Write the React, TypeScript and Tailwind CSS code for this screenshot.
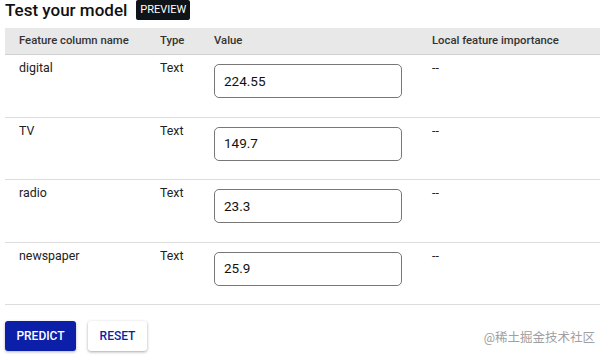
import React from "react";

const rows = [
  { name: "digital", value: "224.55" },
  { name: "TV", value: "149.7" },
  { name: "radio", value: "23.3" },
  { name: "newspaper", value: "25.9" },
];

export default function App() {
  return (
    <div
      className="relative w-[600px] h-[357px] bg-white overflow-hidden text-[#202124]"
      style={{ fontFamily: "Roboto, 'Noto Sans CJK SC', sans-serif" }}
    >
      <div className="flex items-center h-[20px] pl-[5px] gap-[9px]">
        <span className="text-[17px] font-medium leading-[20px] text-[#111]">Test your model</span>
        <span className="bg-[#0f1419] text-white text-[11px] leading-[20px] px-[4px] rounded-[2px] h-[20px]">
          PREVIEW
        </span>
      </div>
      <div className="ml-[5px] mt-[8px]">
        <div className="flex h-[27px] items-center bg-[#e8e8e8] border-b border-[#d0d0d0] text-[11.3px] font-medium text-[#333]">
          <div className="w-[155px] pl-[14px]">Feature column name</div>
          <div className="w-[54px]">Type</div>
          <div className="w-[218px]">Value</div>
          <div>Local feature importance</div>
        </div>
        {rows.map((r) => (
          <div key={r.name} className="flex h-[62.5px] border-b border-[#dcdcdc] text-[12.4px] text-[#222]">
            <div className="w-[155px] pl-[14px] pt-[4px]">{r.name}</div>
            <div className="w-[54px] pt-[4px]">Text</div>
            <div className="w-[218px] pt-[9px]">
              <div className="w-[188px] h-[34px] border border-[#777] rounded-[5px] flex items-center pl-[9px] text-[13.5px] text-[#111]">
                {r.value}
              </div>
            </div>
            <div className="pt-[4px]">--</div>
          </div>
        ))}
        <div className="flex gap-[12px] mt-[16px]">
          <button className="w-[71px] h-[30px] bg-[#0b1fa8] text-white text-[12px] font-medium rounded-[3px] shadow-[0_1px_3px_rgba(0,0,0,0.3)]">
            PREDICT
          </button>
          <button className="w-[59px] h-[30px] bg-white text-[#0b1fa8] text-[12px] font-medium rounded-[3px] shadow-[0_1px_3px_rgba(0,0,0,0.35)]">
            RESET
          </button>
        </div>
      </div>
      <div className="absolute right-[5px] bottom-[9px] text-[12.5px] text-[#a0a0a0]">@稀土掘金技术社区</div>
    </div>
  );
}
